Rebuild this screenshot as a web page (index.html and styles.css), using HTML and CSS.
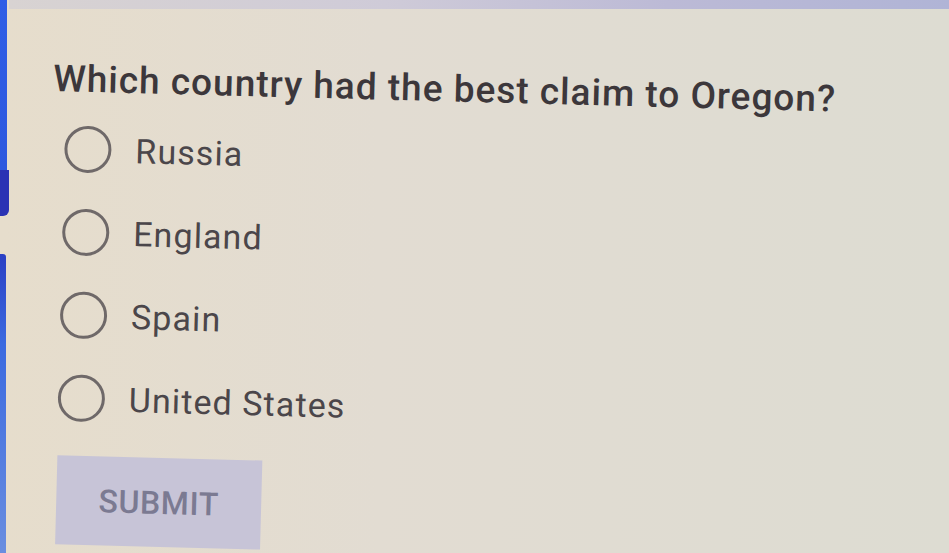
FILE: index.html
```html
<!DOCTYPE html>
<html>
<head>
<meta charset="utf-8">
<link rel="stylesheet" href="styles.css">
</head>
<body>
<div class="screen">
  <div class="sidebar">
    <div class="bar-top"></div>
    <div class="bar-dark"></div>
    <div class="bar-gap"></div>
    <div class="bar-bottom"></div>
  </div>
  <div class="main">
    <div class="topstrip"></div>
    <div class="content">
      <h1 class="question">Which country had the best claim to Oregon?</h1>
      <ul class="options">
        <li class="option"><span class="radio"></span><span class="label">Russia</span></li>
        <li class="option"><span class="radio"></span><span class="label">England</span></li>
        <li class="option"><span class="radio"></span><span class="label">Spain</span></li>
        <li class="option"><span class="radio"></span><span class="label">United States</span></li>
      </ul>
      <button class="submit">SUBMIT</button>
    </div>
  </div>
</div>
</body>
</html>
```
FILE: styles.css
```css
html, body {
  margin: 0;
  padding: 0;
  width: 949px;
  height: 553px;
  overflow: hidden;
}
body {
  font-family: Roboto, "Liberation Sans", sans-serif;
  background: linear-gradient(90deg, #e6ddcc 0%, #e2dcd2 40%, #dddcd2 100%);
}
.screen {
  display: flex;
  width: 949px;
  height: 553px;
}
.sidebar {
  width: 9px;
  display: flex;
  flex-direction: column;
  flex: none;
}
.bar-top {
  height: 170px;
  width: 7px;
  background: linear-gradient(180deg, #2f5ee6 0%, #2d58df 100%);
}
.bar-dark {
  height: 46px;
  width: 9px;
  background: #2b33b4;
  border-bottom-right-radius: 6px;
}
.bar-gap {
  height: 38px;
}
.bar-bottom {
  flex: 1;
  width: 6px;
  background: linear-gradient(180deg, #2a3fc4 0%, #3b6ae0 30%, #6a8ee0 100%);
  border-top-right-radius: 3px;
}
.main {
  flex: 1;
  display: flex;
  flex-direction: column;
}
.topstrip {
  height: 9px;
  background: linear-gradient(90deg, #d8d3d2 0%, #cfcbd8 40%, #bcbad6 70%, #b0b4d6 100%);
  flex: none;
}
.content {
  padding: 49px 0 0 44px;
  transform: rotate(1.5deg);
  transform-origin: 45px 80px;
}
.question {
  margin: 0;
  font-size: 37px;
  font-weight: 500;
  color: #3c373b;
  line-height: 42px;
  letter-spacing: 1px;
}
.options {
  list-style: none;
  margin: 25px 0 0 0;
  padding: 0 0 0 13px;
  display: flex;
  flex-direction: column;
  gap: 36px;
}
.option {
  display: flex;
  align-items: center;
  gap: 24px;
  height: 47px;
}
.radio {
  width: 41px;
  height: 41px;
  border: 3px solid #6f6969;
  border-radius: 50%;
  flex: none;
}
.label {
  font-size: 34px;
  color: #4b464a;
  line-height: 40px;
  letter-spacing: 1.1px;
}
.submit {
  margin: 34px 0 0 14px;
  width: 205px;
  height: 89px;
  border: none;
  background: #c7c4d7;
  color: #7b7a92;
  font-family: Roboto, "Liberation Sans", sans-serif;
  font-size: 32px;
  font-weight: 500;
  letter-spacing: 0.6px;
  padding: 0;
  display: flex;
  align-items: center;
  justify-content: center;
}
```
